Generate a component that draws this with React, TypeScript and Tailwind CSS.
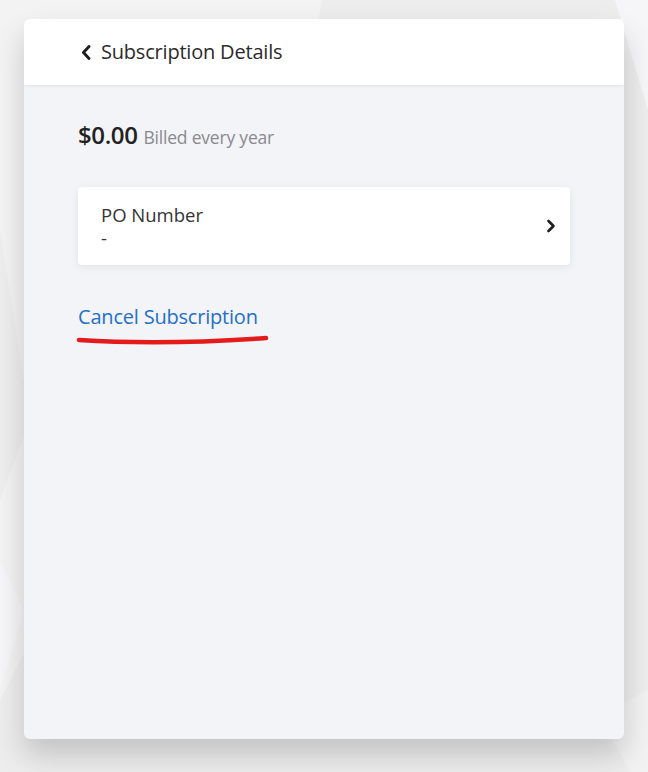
function Backdrop() {
  return (
    <svg className="pointer-events-none absolute inset-0 h-full w-full" viewBox="0 0 648 772" preserveAspectRatio="none">
      <polygon points="0,0 322,0 300,120 0,700" fill="#f3f3f4" />
      <polygon points="615,0 648,0 648,110" fill="#f6f6f8" />
      <polygon points="0,230 30,420 0,500" fill="#eeeeef" />
      <polygon points="0,560 24,610 0,690" fill="#f6f6f8" />
      <polygon points="600,715 648,690 648,772 630,772" fill="#f2f2f3" />
    </svg>
  );
}

export default function App() {
  return (
    <div className="relative h-[772px] w-[648px] overflow-hidden bg-[#ededed] font-['Open_Sans','Liberation_Sans',sans-serif]">
      <Backdrop />
      <div className="relative ml-[24px] mt-[19px] flex h-[720px] w-[600px] flex-col overflow-hidden rounded-[6px] bg-[#f3f4f8] shadow-[0_16px_30px_rgba(0,0,0,0.18)]">
        <header className="flex h-[66px] items-center bg-white pl-[57px] shadow-[0_1px_3px_rgba(0,0,0,0.08)]">
          <svg width="10" height="15" viewBox="0 0 10 15" className="mt-[1px]">
            <path d="M8 1.5 L2.5 7.5 L8 13.5" stroke="#1e1e1e" strokeWidth="2.9" fill="none" strokeLinecap="round" strokeLinejoin="round" />
          </svg>
          <h1 className="ml-[10px] text-[20px] tracking-[-0.2px] text-[#2b2b2b]">Subscription Details</h1>
        </header>

        <section className="px-[54px] pt-[32px]">
          <p className="flex items-baseline">
            <span className="text-[24px] font-semibold tracking-[-0.4px] text-[#222]">$0.00</span>
            <span className="ml-[6px] text-[17.5px] tracking-[-0.2px] text-[#8a8a8f]">Billed every year</span>
          </p>

          <div className="mt-[34px] flex h-[78px] w-[492px] items-center justify-between rounded-[4px] bg-white pl-[23px] pr-[14px] shadow-[0_2px_8px_rgba(0,0,0,0.07)]">
            <div className="leading-[23px]">
              <p className="text-[18.5px] text-[#333]">PO Number</p>
              <p className="text-[18.5px] text-[#333]">-</p>
            </div>
            <svg width="10" height="14" viewBox="0 0 10 14">
              <path d="M2.5 2 L7.5 7 L2.5 12" stroke="#1e1e1e" strokeWidth="2.6" fill="none" strokeLinecap="round" strokeLinejoin="round" />
            </svg>
          </div>

          <div className="mt-[37px] inline-flex flex-col">
            <a className="text-[20px] tracking-[-0.2px] text-[#2470c8]">Cancel Subscription</a>
            <svg className="mt-[3px] -ml-[2px]" width="194" height="10" viewBox="0 0 194 10">
              <path d="M3 5 C 50 8, 120 8, 190 3" stroke="#e41b1b" strokeWidth="4.5" strokeLinecap="round" fill="none" />
            </svg>
          </div>
        </section>
      </div>
    </div>
  );
}
